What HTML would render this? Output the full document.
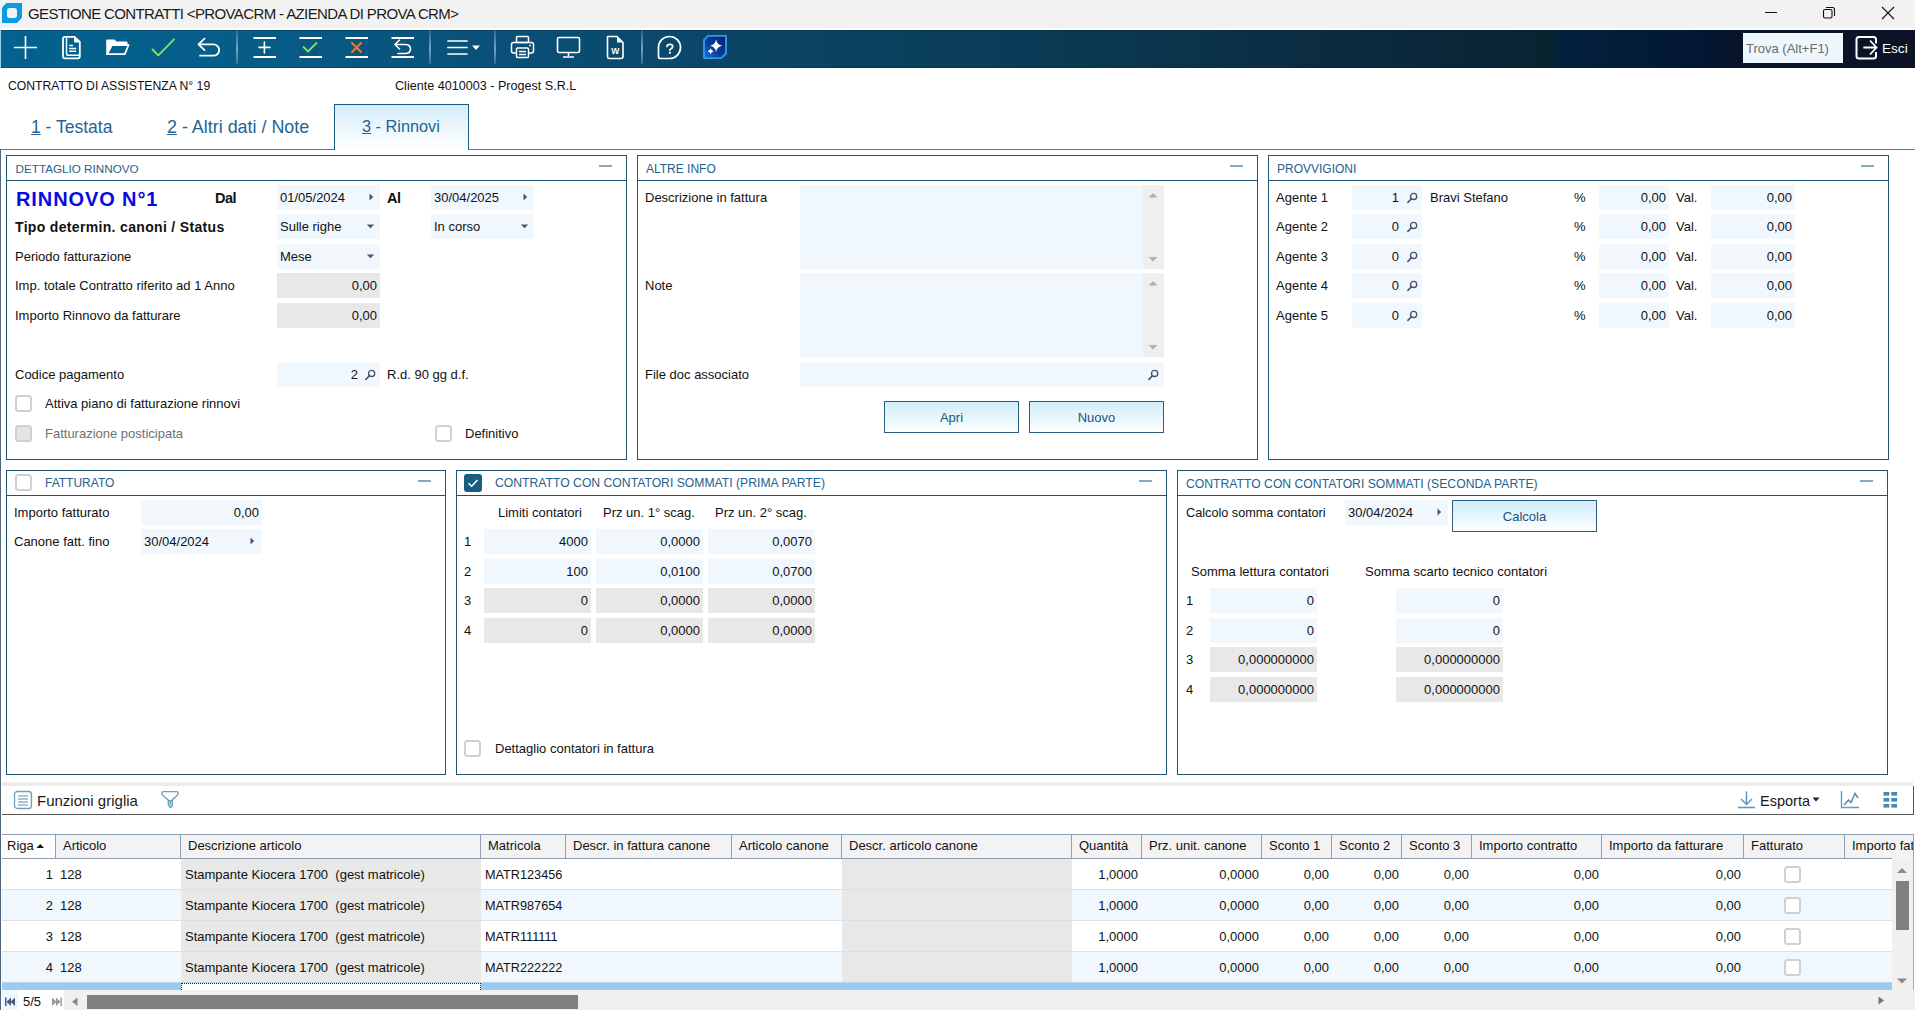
<!DOCTYPE html>
<html><head><meta charset="utf-8"><title>Gestione contratti</title>
<style>
html,body{margin:0;padding:0;width:1915px;height:1010px;overflow:hidden;background:#fff;position:relative;}
body{font-family:"Liberation Sans",sans-serif;color:#111;}
div,span,svg{position:absolute;}
span{white-space:pre;}
</style></head><body>
<div style="left:0px;top:0px;width:1915px;height:28px;background:#f2f2f2"></div>
<div style="left:0px;top:28px;width:1915px;height:2px;background:#fff"></div>
<svg style="left:2px;top:3px;" width="20" height="20" viewBox="0 0 20 20"><path d="M4.4 0 H20 V14.6 L15 20 H0 V4.4 Z" fill="#0a9ce2"/><rect x="5" y="5" width="10" height="10" rx="2.5" fill="#f2f2f2"/></svg>
<span style="left:28px;top:6px;font-size:15px;line-height:15px;color:#1a1a1a;letter-spacing:-0.62px">GESTIONE CONTRATTI &lt;PROVACRM - AZIENDA DI PROVA CRM&gt;</span>
<div style="left:1765px;top:12px;width:12px;height:1px;background:#111"></div>
<svg style="left:1822px;top:6px;" width="14" height="14" viewBox="0 0 14 14"><rect x="1.5" y="3.5" width="8.5" height="8.5" rx="1.5" fill="none" stroke="#111" stroke-width="1.1"/><path d="M4 1.5 H10.5 Q12.5 1.5 12.5 3.5 V10" fill="none" stroke="#111" stroke-width="1.1"/></svg>
<svg style="left:1881px;top:6px;" width="14" height="14" viewBox="0 0 14 14"><path d="M1 1 L13 13 M13 1 L1 13" stroke="#111" stroke-width="1.1"/></svg>
<div style="left:0px;top:30px;width:1915px;height:38px;background:linear-gradient(90deg,#04628f 0%,#065d88 12.5%,#0a5078 26%,#0b4566 38.6%,#0a3d58 52%,#0b2d42 68%,#0a2331 81%,#03213e 81.3%,#031733 88.8%,#0a1428 90.9%,#0c1426 100%)"></div>
<div style="left:0px;top:30px;width:1915px;height:1px;background:rgba(0,30,55,0.3)"></div>
<div style="left:0px;top:67px;width:1915px;height:1px;background:rgba(0,30,55,0.3)"></div>
<div style="left:0px;top:30px;width:1px;height:38px;background:#8fd0f0"></div>
<svg style="left:12px;top:35px;" width="28" height="26" viewBox="0 0 28 26"><path d="M2 12.5 H25 M13.5 1 V24" stroke="#fff" stroke-width="1.6"/></svg>
<svg style="left:60px;top:34px;" width="24" height="27" viewBox="0 0 24 27"><path d="M5 2.8 H14.5 L19.8 8 V22.3 Q19.8 24.3 17.8 24.3 H5 Q3 24.3 3 22.3 V4.8 Q3 2.8 5 2.8 Z" fill="none" stroke="#fff" stroke-width="1.8" stroke-linejoin="round"/><path d="M14.5 2.8 V8 H19.8 Z" fill="#fff" stroke="#fff" stroke-width="1"/><path d="M6.5 4 V19.5 Q6.5 21.3 8.5 21.3 H19.5" fill="none" stroke="#fff" stroke-width="1.5"/><path d="M9.2 11.5 H13 M9.2 14.5 H16.2 M9.2 17.3 H16.2" stroke="#fff" stroke-width="1.5"/></svg>
<svg style="left:104px;top:37px;" width="28" height="20" viewBox="0 0 28 20"><path d="M2.2 17.5 V3.6 Q2.2 2.6 3.2 2.6 H10.5 L12.5 4.6 H22.5 Q23.5 4.6 23.5 5.6 V8 H7.8 L3.2 17.5 Z" fill="#fff"/><path d="M3.2 17.2 L7.8 8 H24.5 L20.8 17.2 Z" fill="none" stroke="#fff" stroke-width="1.8" stroke-linejoin="round"/></svg>
<svg style="left:150px;top:36px;" width="28" height="24" viewBox="0 0 28 24"><path d="M2.5 13.5 L8.3 19.3 L24 3.3" fill="none" stroke="#8ddc64" stroke-width="1.9" stroke-linecap="round" stroke-linejoin="round"/></svg>
<svg style="left:196px;top:36px;" width="28" height="24" viewBox="0 0 28 24"><path d="M3 8.4 H17.5 A5.65 5.65 0 0 1 17.5 19.7 H4" fill="none" stroke="#fff" stroke-width="1.8" stroke-linecap="round"/><path d="M8.5 2.7 L2.5 8.4 L8.5 14.2" fill="none" stroke="#fff" stroke-width="1.8" stroke-linecap="round" stroke-linejoin="round"/></svg>
<div style="left:236px;top:30px;width:2px;height:34px;background:linear-gradient(180deg,rgba(90,140,175,0.35) 0%,rgba(140,185,210,0.8) 55%,rgba(100,150,185,0.45) 100%)"></div>
<div style="left:429px;top:30px;width:2px;height:34px;background:linear-gradient(180deg,rgba(90,140,175,0.35) 0%,rgba(140,185,210,0.8) 55%,rgba(100,150,185,0.45) 100%)"></div>
<div style="left:494px;top:30px;width:2px;height:34px;background:linear-gradient(180deg,rgba(90,140,175,0.35) 0%,rgba(140,185,210,0.8) 55%,rgba(100,150,185,0.45) 100%)"></div>
<div style="left:641px;top:30px;width:2px;height:34px;background:linear-gradient(180deg,rgba(90,140,175,0.35) 0%,rgba(140,185,210,0.8) 55%,rgba(100,150,185,0.45) 100%)"></div>
<svg style="left:253px;top:36px;" width="24" height="24" viewBox="0 0 24 24"><path d="M0.5 1.9 H23 M0.5 20.9 H23" stroke="#fff" stroke-width="2"/><path d="M6 11.4 H17 M11.4 6 V17" stroke="#fff" stroke-width="1.6" stroke-linecap="round"/></svg>
<svg style="left:299px;top:36px;" width="24" height="24" viewBox="0 0 24 24"><path d="M0.5 1.9 H23 M0.5 20.9 H23" stroke="#fff" stroke-width="2"/><path d="M4.5 11 L9 15.5 L17.5 7" fill="none" stroke="#8ddc64" stroke-width="1.8" stroke-linecap="round"/></svg>
<svg style="left:345px;top:36px;" width="24" height="24" viewBox="0 0 24 24"><path d="M0.5 1.9 H23 M0.5 20.9 H23" stroke="#fff" stroke-width="2"/><path d="M7 7 L16 16 M16 7 L7 16" stroke="#ef7b3c" stroke-width="1.8" stroke-linecap="round"/></svg>
<svg style="left:391px;top:36px;" width="24" height="24" viewBox="0 0 24 24"><path d="M0.5 1.9 H23 M0.5 20.9 H23" stroke="#fff" stroke-width="2"/><path d="M5 8.5 H14 Q19.5 8.5 19.5 13 Q19.5 17.5 14 17.5 H7" fill="none" stroke="#fff" stroke-width="1.6" stroke-linecap="round"/><path d="M8.5 4 L4 8.5 L8.5 13" fill="none" stroke="#fff" stroke-width="1.6" stroke-linecap="round"/></svg>
<svg style="left:446px;top:38px;" width="36" height="20" viewBox="0 0 36 20"><path d="M2 3 H21 M2 9.5 H21 M2 16 H21" stroke="#fff" stroke-width="1.7" stroke-linecap="round"/><path d="M26 7.5 H34 L30 12 Z" fill="#fff"/></svg>
<svg style="left:509px;top:34px;" width="28" height="27" viewBox="0 0 28 27"><rect x="7.5" y="2.5" width="12" height="6" rx="1" fill="none" stroke="#fff" stroke-width="1.5"/><path d="M7 19 H4.5 Q2.5 19 2.5 17 V10.5 Q2.5 8.5 4.5 8.5 H22.5 Q24.5 8.5 24.5 10.5 V17 Q24.5 19 22.5 19 H20" fill="none" stroke="#fff" stroke-width="1.5"/><rect x="7.5" y="14" width="12" height="9.5" rx="1" fill="none" stroke="#fff" stroke-width="1.5"/><path d="M10 17.5 H17 M10 20.5 H17" stroke="#fff" stroke-width="1.3"/><circle cx="21" cy="11.5" r="0.9" fill="#fff"/></svg>
<svg style="left:555px;top:35px;" width="28" height="25" viewBox="0 0 28 25"><rect x="2.5" y="2.5" width="22" height="15" rx="1.5" fill="none" stroke="#fff" stroke-width="1.6"/><path d="M13.5 17.5 V21 M8 22 H19" stroke="#fff" stroke-width="1.6"/></svg>
<svg style="left:603px;top:34px;" width="24" height="27" viewBox="0 0 24 27"><path d="M4.5 2.5 H14 L20 8.5 V22.5 Q20 24.5 18 24.5 H6.5 Q4.5 24.5 4.5 22.5 Z" fill="none" stroke="#fff" stroke-width="1.6" stroke-linejoin="round"/><path d="M14 2.5 V8.5 H20 Z" fill="#fff"/><text x="12.3" y="20" font-family="Liberation Sans" font-weight="bold" font-size="8.5" fill="#fff" text-anchor="middle">W</text></svg>
<svg style="left:656px;top:34px;" width="28" height="27" viewBox="0 0 28 27"><path d="M13.5 2.5 A11 11 0 1 1 13.5 24.5 H4.5 Q2.5 24.5 2.5 22.5 V13.5 A11 11 0 0 1 13.5 2.5 Z" fill="none" stroke="#fff" stroke-width="1.7"/><path d="M11 12.4 Q11 10.3 13.9 10.3 Q16.7 10.3 16.7 12.5 Q16.7 13.9 15 14.7 Q13.9 15.2 13.9 16.3" fill="none" stroke="#fff" stroke-width="1.7" stroke-linecap="round"/><circle cx="13.9" cy="18.8" r="1.1" fill="#fff"/></svg>
<svg style="left:702px;top:34px;" width="26" height="27" viewBox="0 0 26 27"><defs><linearGradient id="aig" x1="0" y1="1" x2="1" y2="0"><stop offset="0" stop-color="#1e6fd0"/><stop offset="0.45" stop-color="#0b3a98"/><stop offset="1" stop-color="#0a1f6e"/></linearGradient></defs><path d="M6 1.9 H24 V19.5 L19.3 24.1 H2 V6 Z" fill="url(#aig)" stroke="#2c9be0" stroke-width="1.9" stroke-linejoin="round"/><path d="M14.1 5.6 Q15.1 10.8 20.2 11.8 Q15.1 12.8 14.1 18 Q13.1 12.8 8 11.8 Q13.1 10.8 14.1 5.6 Z" fill="#fff"/><path d="M8.6 14.2 Q9.2 16.7 11.7 17.3 Q9.2 17.9 8.6 20.4 Q8 17.9 5.5 17.3 Q8 16.7 8.6 14.2 Z" fill="#fff"/></svg>
<div style="left:1743px;top:33px;width:100px;height:30px;background:#eef7fe"></div>
<span style="left:1746px;top:42px;font-size:13px;line-height:13px;color:#6b6b6b">Trova (Alt+F1)</span>
<svg style="left:1854px;top:35px;" width="26" height="26" viewBox="0 0 26 26"><path d="M22 8.5 V4.5 Q22 2 19.5 2 H5 Q2.5 2 2.5 4.5 V21 Q2.5 23.5 5 23.5 H19.5 Q22 23.5 22 21 V17" fill="none" stroke="#fff" stroke-width="2"/><path d="M9.3 12.5 H22.5 M16 5.5 L22.5 12.5 L16 19.5" fill="none" stroke="#fff" stroke-width="1.8"/></svg>
<span style="left:1882px;top:42px;font-size:13.6px;line-height:13.6px;color:#fff">Esci</span>
<span style="left:8px;top:80px;font-size:12.2px;line-height:12.2px;color:#111">CONTRATTO DI ASSISTENZA N° 19</span>
<span style="left:395px;top:80px;font-size:12.6px;line-height:12.6px;color:#111">Cliente 4010003 - Progest S.R.L</span>
<div style="left:0px;top:149px;width:1915px;height:1px;background:#627a90"></div>
<div style="left:0px;top:149px;width:1px;height:861px;background:#50647c"></div>
<div style="left:334px;top:104px;width:135px;height:46px;background:linear-gradient(180deg,#d2ecfb 0%,#eaf6fd 45%,#ffffff 100%);border:1px solid #1d5c7c;border-bottom:none;box-sizing:border-box"></div>
<span style="left:31px;top:119px;font-size:17.5px;line-height:17.5px;color:#236494"><u>1</u> - Testata</span>
<span style="left:167px;top:119px;font-size:17.9px;line-height:17.9px;color:#236494"><u>2</u> - Altri dati / Note</span>
<span style="left:362px;top:118px;font-size:16.3px;line-height:16.3px;color:#236494"><u>3</u> - Rinnovi</span>
<div style="left:6px;top:155px;width:621px;height:305px;border:1px solid #1f5571;box-sizing:border-box;background:#fff"></div>
<div style="left:6px;top:180px;width:621px;height:1px;background:#1f5571"></div>
<span style="left:15.5px;top:163px;font-size:11.7px;line-height:11.7px;color:#24628e">DETTAGLIO RINNOVO</span>
<div style="left:599px;top:165px;width:13px;height:2px;background:#88a8bc"></div>
<span style="left:16px;top:189px;font-size:20px;line-height:20px;color:#0a0ae0;font-weight:bold;letter-spacing:0.9px">RINNOVO N°1</span>
<span style="left:215px;top:191px;font-size:14.5px;line-height:14.5px;color:#111;font-weight:bold;letter-spacing:-0.5px">Dal</span>
<span style="left:387px;top:191px;font-size:14.5px;line-height:14.5px;color:#111;font-weight:bold;letter-spacing:-0.5px">Al</span>
<span style="left:15px;top:220px;font-size:14px;line-height:14px;color:#111;font-weight:bold;letter-spacing:0.33px">Tipo determin. canoni / Status</span>
<div style="left:277px;top:185px;width:103px;height:25px;background:#f0f8fe"></div>
<span style="left:280px;top:191px;font-size:13px;line-height:13px;">01/05/2024</span>
<svg style="left:368px;top:193px;" width="6" height="8" viewBox="0 0 6 8"><path d="M1.5 0.5 L5.2 4 L1.5 7.5 Z" fill="#4a5670"/></svg>
<div style="left:431px;top:185px;width:103px;height:25px;background:#f0f8fe"></div>
<span style="left:434px;top:191px;font-size:13px;line-height:13px;">30/04/2025</span>
<svg style="left:522px;top:193px;" width="6" height="8" viewBox="0 0 6 8"><path d="M1.5 0.5 L5.2 4 L1.5 7.5 Z" fill="#4a5670"/></svg>
<div style="left:277px;top:214px;width:103px;height:25px;background:#f0f8fe"></div>
<span style="left:280px;top:220px;font-size:13px;line-height:13px;">Sulle righe</span>
<svg style="left:366px;top:223px;" width="9" height="6" viewBox="0 0 9 6"><path d="M0.8 1.5 L8.2 1.5 L4.5 5.3 Z" fill="#4a5670"/></svg>
<div style="left:431px;top:214px;width:103px;height:25px;background:#f0f8fe"></div>
<span style="left:434px;top:220px;font-size:13px;line-height:13px;">In corso</span>
<svg style="left:520px;top:223px;" width="9" height="6" viewBox="0 0 9 6"><path d="M0.8 1.5 L8.2 1.5 L4.5 5.3 Z" fill="#4a5670"/></svg>
<span style="left:15px;top:250px;font-size:13px;line-height:13px;">Periodo fatturazione</span>
<div style="left:277px;top:244px;width:103px;height:25px;background:#f0f8fe"></div>
<span style="left:280px;top:250px;font-size:13px;line-height:13px;">Mese</span>
<svg style="left:366px;top:253px;" width="9" height="6" viewBox="0 0 9 6"><path d="M0.8 1.5 L8.2 1.5 L4.5 5.3 Z" fill="#4a5670"/></svg>
<span style="left:15px;top:279px;font-size:13px;line-height:13px;">Imp. totale Contratto riferito ad 1 Anno</span>
<div style="left:277px;top:273px;width:103px;height:25px;background:#e8e8e8"></div>
<span style="right:1538px;top:279px;font-size:13px;line-height:13px;">0,00</span>
<span style="left:15px;top:309px;font-size:13px;line-height:13px;">Importo Rinnovo da fatturare</span>
<div style="left:277px;top:303px;width:103px;height:25px;background:#e8e8e8"></div>
<span style="right:1538px;top:309px;font-size:13px;line-height:13px;">0,00</span>
<span style="left:15px;top:368px;font-size:13px;line-height:13px;">Codice pagamento</span>
<div style="left:277px;top:362px;width:103px;height:25px;background:#f0f8fe"></div>
<span style="right:1557px;top:368px;font-size:13px;line-height:13px;">2</span>
<svg style="left:364px;top:368px;" width="13" height="13" viewBox="0 0 13 13"><circle cx="7.6" cy="5.4" r="3.1" fill="none" stroke="#46526a" stroke-width="1.3"/><path d="M5.4 7.7 L1.9 11.4" stroke="#46526a" stroke-width="1.6" stroke-linecap="round"/></svg>
<span style="left:387px;top:368px;font-size:13px;line-height:13px;">R.d. 90 gg d.f.</span>
<div style="left:15px;top:395px;width:17px;height:17px;background:#fff;border:2px solid #d0d0d0;border-radius:3.5px;box-sizing:border-box"></div>
<span style="left:45px;top:397px;font-size:13px;line-height:13px;">Attiva piano di fatturazione rinnovi</span>
<div style="left:15px;top:425px;width:17px;height:17px;background:#e4e4e4;border:2px solid #d0d0d0;border-radius:3.5px;box-sizing:border-box"></div>
<span style="left:45px;top:427px;font-size:13px;line-height:13px;color:#707070">Fatturazione posticipata</span>
<div style="left:435px;top:425px;width:17px;height:17px;background:#fff;border:2px solid #d0d0d0;border-radius:3.5px;box-sizing:border-box"></div>
<span style="left:465px;top:427px;font-size:13px;line-height:13px;">Definitivo</span>
<div style="left:637px;top:155px;width:621px;height:305px;border:1px solid #1f5571;box-sizing:border-box;background:#fff"></div>
<div style="left:637px;top:180px;width:621px;height:1px;background:#1f5571"></div>
<span style="left:646px;top:163px;font-size:12px;line-height:12px;color:#24628e">ALTRE INFO</span>
<div style="left:1230px;top:165px;width:13px;height:2px;background:#88a8bc"></div>
<span style="left:645px;top:191px;font-size:13px;line-height:13px;">Descrizione in fattura</span>
<div style="left:800px;top:185px;width:364px;height:84px;background:#f0f8fe"></div>
<div style="left:1143px;top:185px;width:21px;height:84px;background:#efefef"></div>
<svg style="left:1148px;top:192px;" width="10" height="7" viewBox="0 0 10 7"><path d="M0.5 5.5 L5 1 L9.5 5.5 Z" fill="#aeb2be"/></svg>
<svg style="left:1148px;top:256px;" width="10" height="7" viewBox="0 0 10 7"><path d="M0.5 1 L5 5.5 L9.5 1 Z" fill="#aeb2be"/></svg>
<span style="left:645px;top:279px;font-size:13px;line-height:13px;">Note</span>
<div style="left:800px;top:273px;width:364px;height:84px;background:#f0f8fe"></div>
<div style="left:1143px;top:273px;width:21px;height:84px;background:#efefef"></div>
<svg style="left:1148px;top:280px;" width="10" height="7" viewBox="0 0 10 7"><path d="M0.5 5.5 L5 1 L9.5 5.5 Z" fill="#aeb2be"/></svg>
<svg style="left:1148px;top:344px;" width="10" height="7" viewBox="0 0 10 7"><path d="M0.5 1 L5 5.5 L9.5 1 Z" fill="#aeb2be"/></svg>
<span style="left:645px;top:368px;font-size:13px;line-height:13px;">File doc associato</span>
<div style="left:800px;top:362px;width:364px;height:25px;background:#f0f8fe"></div>
<svg style="left:1147px;top:368px;" width="13" height="13" viewBox="0 0 13 13"><circle cx="7.6" cy="5.4" r="3.1" fill="none" stroke="#46526a" stroke-width="1.3"/><path d="M5.4 7.7 L1.9 11.4" stroke="#46526a" stroke-width="1.6" stroke-linecap="round"/></svg>
<div style="left:884px;top:401px;width:135px;height:32px;background:linear-gradient(180deg,#d2edfb 0%,#e8f6fd 55%,#ffffff 100%);border:1px solid #2a5f80;box-sizing:border-box"></div>
<span style="left:851.5px;width:200px;text-align:center;top:411px;font-size:13px;line-height:13px;color:#1d5478">Apri</span>
<div style="left:1029px;top:401px;width:135px;height:32px;background:linear-gradient(180deg,#d2edfb 0%,#e8f6fd 55%,#ffffff 100%);border:1px solid #2a5f80;box-sizing:border-box"></div>
<span style="left:996.5px;width:200px;text-align:center;top:411px;font-size:13px;line-height:13px;color:#1d5478">Nuovo</span>
<div style="left:1268px;top:155px;width:621px;height:305px;border:1px solid #1f5571;box-sizing:border-box;background:#fff"></div>
<div style="left:1268px;top:180px;width:621px;height:1px;background:#1f5571"></div>
<span style="left:1277px;top:163px;font-size:12px;line-height:12px;color:#24628e">PROVVIGIONI</span>
<div style="left:1861px;top:165px;width:13px;height:2px;background:#88a8bc"></div>
<span style="left:1276px;top:191px;font-size:13px;line-height:13px;">Agente 1</span>
<div style="left:1352px;top:185px;width:70px;height:25px;background:#f0f8fe"></div>
<span style="right:516px;top:191px;font-size:13px;line-height:13px;">1</span>
<svg style="left:1406px;top:191px;" width="13" height="13" viewBox="0 0 13 13"><circle cx="7.6" cy="5.4" r="3.1" fill="none" stroke="#46526a" stroke-width="1.3"/><path d="M5.4 7.7 L1.9 11.4" stroke="#46526a" stroke-width="1.6" stroke-linecap="round"/></svg>
<span style="left:1430px;top:191px;font-size:13px;line-height:13px;">Bravi Stefano</span>
<span style="left:1574px;top:191px;font-size:13px;line-height:13px;">%</span>
<div style="left:1599px;top:185px;width:70px;height:25px;background:#f0f8fe"></div>
<span style="right:249px;top:191px;font-size:13px;line-height:13px;">0,00</span>
<span style="left:1676px;top:191px;font-size:13px;line-height:13px;">Val.</span>
<div style="left:1711px;top:185px;width:84px;height:25px;background:#f0f8fe"></div>
<span style="right:123px;top:191px;font-size:13px;line-height:13px;">0,00</span>
<span style="left:1276px;top:220px;font-size:13px;line-height:13px;">Agente 2</span>
<div style="left:1352px;top:214px;width:70px;height:25px;background:#f0f8fe"></div>
<span style="right:516px;top:220px;font-size:13px;line-height:13px;">0</span>
<svg style="left:1406px;top:220px;" width="13" height="13" viewBox="0 0 13 13"><circle cx="7.6" cy="5.4" r="3.1" fill="none" stroke="#46526a" stroke-width="1.3"/><path d="M5.4 7.7 L1.9 11.4" stroke="#46526a" stroke-width="1.6" stroke-linecap="round"/></svg>
<span style="left:1574px;top:220px;font-size:13px;line-height:13px;">%</span>
<div style="left:1599px;top:214px;width:70px;height:25px;background:#f0f8fe"></div>
<span style="right:249px;top:220px;font-size:13px;line-height:13px;">0,00</span>
<span style="left:1676px;top:220px;font-size:13px;line-height:13px;">Val.</span>
<div style="left:1711px;top:214px;width:84px;height:25px;background:#f0f8fe"></div>
<span style="right:123px;top:220px;font-size:13px;line-height:13px;">0,00</span>
<span style="left:1276px;top:250px;font-size:13px;line-height:13px;">Agente 3</span>
<div style="left:1352px;top:244px;width:70px;height:25px;background:#f0f8fe"></div>
<span style="right:516px;top:250px;font-size:13px;line-height:13px;">0</span>
<svg style="left:1406px;top:250px;" width="13" height="13" viewBox="0 0 13 13"><circle cx="7.6" cy="5.4" r="3.1" fill="none" stroke="#46526a" stroke-width="1.3"/><path d="M5.4 7.7 L1.9 11.4" stroke="#46526a" stroke-width="1.6" stroke-linecap="round"/></svg>
<span style="left:1574px;top:250px;font-size:13px;line-height:13px;">%</span>
<div style="left:1599px;top:244px;width:70px;height:25px;background:#f0f8fe"></div>
<span style="right:249px;top:250px;font-size:13px;line-height:13px;">0,00</span>
<span style="left:1676px;top:250px;font-size:13px;line-height:13px;">Val.</span>
<div style="left:1711px;top:244px;width:84px;height:25px;background:#f0f8fe"></div>
<span style="right:123px;top:250px;font-size:13px;line-height:13px;">0,00</span>
<span style="left:1276px;top:279px;font-size:13px;line-height:13px;">Agente 4</span>
<div style="left:1352px;top:273px;width:70px;height:25px;background:#f0f8fe"></div>
<span style="right:516px;top:279px;font-size:13px;line-height:13px;">0</span>
<svg style="left:1406px;top:279px;" width="13" height="13" viewBox="0 0 13 13"><circle cx="7.6" cy="5.4" r="3.1" fill="none" stroke="#46526a" stroke-width="1.3"/><path d="M5.4 7.7 L1.9 11.4" stroke="#46526a" stroke-width="1.6" stroke-linecap="round"/></svg>
<span style="left:1574px;top:279px;font-size:13px;line-height:13px;">%</span>
<div style="left:1599px;top:273px;width:70px;height:25px;background:#f0f8fe"></div>
<span style="right:249px;top:279px;font-size:13px;line-height:13px;">0,00</span>
<span style="left:1676px;top:279px;font-size:13px;line-height:13px;">Val.</span>
<div style="left:1711px;top:273px;width:84px;height:25px;background:#f0f8fe"></div>
<span style="right:123px;top:279px;font-size:13px;line-height:13px;">0,00</span>
<span style="left:1276px;top:309px;font-size:13px;line-height:13px;">Agente 5</span>
<div style="left:1352px;top:303px;width:70px;height:25px;background:#f0f8fe"></div>
<span style="right:516px;top:309px;font-size:13px;line-height:13px;">0</span>
<svg style="left:1406px;top:309px;" width="13" height="13" viewBox="0 0 13 13"><circle cx="7.6" cy="5.4" r="3.1" fill="none" stroke="#46526a" stroke-width="1.3"/><path d="M5.4 7.7 L1.9 11.4" stroke="#46526a" stroke-width="1.6" stroke-linecap="round"/></svg>
<span style="left:1574px;top:309px;font-size:13px;line-height:13px;">%</span>
<div style="left:1599px;top:303px;width:70px;height:25px;background:#f0f8fe"></div>
<span style="right:249px;top:309px;font-size:13px;line-height:13px;">0,00</span>
<span style="left:1676px;top:309px;font-size:13px;line-height:13px;">Val.</span>
<div style="left:1711px;top:303px;width:84px;height:25px;background:#f0f8fe"></div>
<span style="right:123px;top:309px;font-size:13px;line-height:13px;">0,00</span>
<div style="left:6px;top:470px;width:440px;height:305px;border:1px solid #1f5571;box-sizing:border-box;background:#fff"></div>
<div style="left:6px;top:495px;width:440px;height:1px;background:#1f5571"></div>
<span style="left:45px;top:477px;font-size:12px;line-height:12px;color:#24628e">FATTURATO</span>
<div style="left:418px;top:480px;width:13px;height:2px;background:#88a8bc"></div>
<div style="left:15px;top:474px;width:17px;height:17px;background:#fff;border:2px solid #d0d0d0;border-radius:3.5px;box-sizing:border-box"></div>
<span style="left:14px;top:506px;font-size:13px;line-height:13px;">Importo fatturato</span>
<div style="left:141px;top:500px;width:121px;height:25px;background:#f0f8fe"></div>
<span style="right:1656px;top:506px;font-size:13px;line-height:13px;">0,00</span>
<span style="left:14px;top:535px;font-size:13px;line-height:13px;">Canone fatt. fino</span>
<div style="left:141px;top:529px;width:121px;height:25px;background:#f0f8fe"></div>
<span style="left:144px;top:535px;font-size:13px;line-height:13px;">30/04/2024</span>
<svg style="left:249px;top:537px;" width="6" height="8" viewBox="0 0 6 8"><path d="M1.5 0.5 L5.2 4 L1.5 7.5 Z" fill="#4a5670"/></svg>
<div style="left:456px;top:470px;width:711px;height:305px;border:1px solid #1f5571;box-sizing:border-box;background:#fff"></div>
<div style="left:456px;top:495px;width:711px;height:1px;background:#1f5571"></div>
<span style="left:495px;top:477px;font-size:12.2px;line-height:12.2px;color:#24628e">CONTRATTO CON CONTATORI SOMMATI (PRIMA PARTE)</span>
<div style="left:1139px;top:480px;width:13px;height:2px;background:#88a8bc"></div>
<div style="left:464px;top:474px;width:18px;height:18px;background:#1b5d7e;border-radius:3px"></div>
<svg style="left:464px;top:474px;" width="18" height="18" viewBox="0 0 18 18"><path d="M4.5 9.2 L7.6 12.2 L13.5 6" fill="none" stroke="#fff" stroke-width="1.6"/></svg>
<span style="left:498px;top:506px;font-size:13px;line-height:13px;">Limiti contatori</span>
<span style="left:603px;top:506px;font-size:13px;line-height:13px;">Prz un. 1° scag.</span>
<span style="left:715px;top:506px;font-size:13px;line-height:13px;">Prz un. 2° scag.</span>
<span style="left:464px;top:535px;font-size:13px;line-height:13px;">1</span>
<div style="left:484px;top:529px;width:107px;height:25px;background:#f0f8fe"></div>
<span style="right:1327px;top:535px;font-size:13px;line-height:13px;">4000</span>
<div style="left:596px;top:529px;width:107px;height:25px;background:#f0f8fe"></div>
<span style="right:1215px;top:535px;font-size:13px;line-height:13px;">0,0000</span>
<div style="left:708px;top:529px;width:107px;height:25px;background:#f0f8fe"></div>
<span style="right:1103px;top:535px;font-size:13px;line-height:13px;">0,0070</span>
<span style="left:464px;top:565px;font-size:13px;line-height:13px;">2</span>
<div style="left:484px;top:559px;width:107px;height:25px;background:#f0f8fe"></div>
<span style="right:1327px;top:565px;font-size:13px;line-height:13px;">100</span>
<div style="left:596px;top:559px;width:107px;height:25px;background:#f0f8fe"></div>
<span style="right:1215px;top:565px;font-size:13px;line-height:13px;">0,0100</span>
<div style="left:708px;top:559px;width:107px;height:25px;background:#f0f8fe"></div>
<span style="right:1103px;top:565px;font-size:13px;line-height:13px;">0,0700</span>
<span style="left:464px;top:594px;font-size:13px;line-height:13px;">3</span>
<div style="left:484px;top:588px;width:107px;height:25px;background:#e8e8e8"></div>
<span style="right:1327px;top:594px;font-size:13px;line-height:13px;">0</span>
<div style="left:596px;top:588px;width:107px;height:25px;background:#e8e8e8"></div>
<span style="right:1215px;top:594px;font-size:13px;line-height:13px;">0,0000</span>
<div style="left:708px;top:588px;width:107px;height:25px;background:#e8e8e8"></div>
<span style="right:1103px;top:594px;font-size:13px;line-height:13px;">0,0000</span>
<span style="left:464px;top:624px;font-size:13px;line-height:13px;">4</span>
<div style="left:484px;top:618px;width:107px;height:25px;background:#e8e8e8"></div>
<span style="right:1327px;top:624px;font-size:13px;line-height:13px;">0</span>
<div style="left:596px;top:618px;width:107px;height:25px;background:#e8e8e8"></div>
<span style="right:1215px;top:624px;font-size:13px;line-height:13px;">0,0000</span>
<div style="left:708px;top:618px;width:107px;height:25px;background:#e8e8e8"></div>
<span style="right:1103px;top:624px;font-size:13px;line-height:13px;">0,0000</span>
<div style="left:464px;top:740px;width:17px;height:17px;background:#fff;border:2px solid #d0d0d0;border-radius:3.5px;box-sizing:border-box"></div>
<span style="left:495px;top:742px;font-size:13px;line-height:13px;">Dettaglio contatori in fattura</span>
<div style="left:1177px;top:470px;width:711px;height:305px;border:1px solid #1f5571;box-sizing:border-box;background:#fff"></div>
<div style="left:1177px;top:495px;width:711px;height:1px;background:#1f5571"></div>
<span style="left:1186px;top:478px;font-size:12.2px;line-height:12.2px;color:#24628e">CONTRATTO CON CONTATORI SOMMATI (SECONDA PARTE)</span>
<div style="left:1860px;top:480px;width:13px;height:2px;background:#88a8bc"></div>
<span style="left:1186px;top:507px;font-size:12.7px;line-height:12.7px;">Calcolo somma contatori</span>
<div style="left:1345px;top:500px;width:103px;height:25px;background:#f0f8fe"></div>
<span style="left:1348px;top:506px;font-size:13px;line-height:13px;">30/04/2024</span>
<svg style="left:1436px;top:508px;" width="6" height="8" viewBox="0 0 6 8"><path d="M1.5 0.5 L5.2 4 L1.5 7.5 Z" fill="#4a5670"/></svg>
<div style="left:1452px;top:500px;width:145px;height:32px;background:linear-gradient(180deg,#d2edfb 0%,#e8f6fd 55%,#ffffff 100%);border:1px solid #2a5f80;box-sizing:border-box"></div>
<span style="left:1424.5px;width:200px;text-align:center;top:510px;font-size:13px;line-height:13px;color:#1d5478">Calcola</span>
<span style="left:1191px;top:565px;font-size:13px;line-height:13px;">Somma lettura contatori</span>
<span style="left:1365px;top:565px;font-size:13px;line-height:13px;">Somma scarto tecnico contatori</span>
<span style="left:1186px;top:594px;font-size:13px;line-height:13px;">1</span>
<div style="left:1210px;top:588px;width:107px;height:25px;background:#f0f8fe"></div>
<span style="right:601px;top:594px;font-size:13px;line-height:13px;">0</span>
<div style="left:1396px;top:588px;width:107px;height:25px;background:#f0f8fe"></div>
<span style="right:415px;top:594px;font-size:13px;line-height:13px;">0</span>
<span style="left:1186px;top:624px;font-size:13px;line-height:13px;">2</span>
<div style="left:1210px;top:618px;width:107px;height:25px;background:#f0f8fe"></div>
<span style="right:601px;top:624px;font-size:13px;line-height:13px;">0</span>
<div style="left:1396px;top:618px;width:107px;height:25px;background:#f0f8fe"></div>
<span style="right:415px;top:624px;font-size:13px;line-height:13px;">0</span>
<span style="left:1186px;top:653px;font-size:13px;line-height:13px;">3</span>
<div style="left:1210px;top:647px;width:107px;height:25px;background:#e8e8e8"></div>
<span style="right:601px;top:653px;font-size:13px;line-height:13px;">0,000000000</span>
<div style="left:1396px;top:647px;width:107px;height:25px;background:#e8e8e8"></div>
<span style="right:415px;top:653px;font-size:13px;line-height:13px;">0,000000000</span>
<span style="left:1186px;top:683px;font-size:13px;line-height:13px;">4</span>
<div style="left:1210px;top:677px;width:107px;height:25px;background:#e8e8e8"></div>
<span style="right:601px;top:683px;font-size:13px;line-height:13px;">0,000000000</span>
<div style="left:1396px;top:677px;width:107px;height:25px;background:#e8e8e8"></div>
<span style="right:415px;top:683px;font-size:13px;line-height:13px;">0,000000000</span>
<div style="left:2px;top:782px;width:1911px;height:4px;background:#ececec"></div>
<div style="left:2px;top:786px;width:1912px;height:29px;background:#fff;border-right:1px solid #555;border-bottom:1px solid #555;box-sizing:border-box"></div>
<svg style="left:13px;top:790px;" width="20" height="20" viewBox="0 0 20 20"><rect x="1.5" y="1.5" width="17" height="17" rx="3" fill="#fff" stroke="#6e9cbc" stroke-width="1.3"/><path d="M5 6 H15 M5 9 H15 M5 12 H15 M5 15 H15" stroke="#7a8a9a" stroke-width="1.2"/><path d="M5 9 H15 M5 12 H15" stroke="#8ccaf0" stroke-width="1.2"/></svg>
<span style="left:37px;top:793px;font-size:15px;line-height:15px;color:#1a1a1a">Funzioni griglia</span>
<svg style="left:160px;top:790px;" width="20" height="20" viewBox="0 0 20 20"><path d="M3.5 1.6 H16.5 Q18.2 1.6 18.2 3.2 Q18.2 4.8 15.5 7 L12.3 9.6 V15.5 L10.5 17.8 M3.5 1.6 Q1.8 1.6 1.8 3.2 Q1.8 4.8 4.5 7 L8.3 10 V14.5 L10.5 17.8" fill="none" stroke="#6e9ebc" stroke-width="1.4" stroke-linejoin="round"/><path d="M8.3 10.8 H12.3 M10.3 10.8 V15" stroke="#6e9ebc" stroke-width="1.4"/></svg>
<svg style="left:1736px;top:790px;" width="22" height="20" viewBox="0 0 22 20"><path d="M10.5 1.5 V14 M5 9 L10.5 14.5 L16 9" fill="none" stroke="#5e98ba" stroke-width="1.5"/><path d="M2 17.5 H19" stroke="#5e98ba" stroke-width="1.6"/></svg>
<span style="left:1760px;top:794px;font-size:14.5px;line-height:14.5px;color:#1a1a1a">Esporta</span>
<svg style="left:1812px;top:797px;" width="8" height="5" viewBox="0 0 8 5"><path d="M0.5 0.5 H7.5 L4 4.5 Z" fill="#222"/></svg>
<svg style="left:1840px;top:790px;" width="22" height="20" viewBox="0 0 22 20"><path d="M1.5 1 V17.5 H19" fill="none" stroke="#6a9ab8" stroke-width="1.4"/><path d="M4 15 L8.5 10 L11 12.5 L15 3.5 L18 8" fill="none" stroke="#4a88b0" stroke-width="1.4"/></svg>
<svg style="left:1882px;top:791px;" width="17" height="18" viewBox="0 0 17 18"><g fill="#4a88b0"><rect x="1.5" y="1" width="5.8" height="3.6"/><rect x="9.3" y="1" width="5.8" height="3.6"/><rect x="1.5" y="7" width="5.8" height="3.6"/><rect x="9.3" y="7" width="5.8" height="3.6"/><rect x="1.5" y="13" width="5.8" height="3.6"/><rect x="9.3" y="13" width="5.8" height="3.6"/></g></svg>
<div style="left:2px;top:858px;width:1890px;height:32px;background:#fff"></div>
<div style="left:181px;top:858px;width:300px;height:32px;background:#e8e8e8"></div>
<div style="left:842px;top:858px;width:230px;height:32px;background:#e8e8e8"></div>
<div style="left:2px;top:889px;width:1890px;height:32px;background:#f0f8fe"></div>
<div style="left:181px;top:889px;width:300px;height:32px;background:#e8e8e8"></div>
<div style="left:842px;top:889px;width:230px;height:32px;background:#e8e8e8"></div>
<div style="left:2px;top:920px;width:1890px;height:32px;background:#fff"></div>
<div style="left:181px;top:920px;width:300px;height:32px;background:#e8e8e8"></div>
<div style="left:842px;top:920px;width:230px;height:32px;background:#e8e8e8"></div>
<div style="left:2px;top:951px;width:1890px;height:32px;background:#f0f8fe"></div>
<div style="left:181px;top:951px;width:300px;height:32px;background:#e8e8e8"></div>
<div style="left:842px;top:951px;width:230px;height:32px;background:#e8e8e8"></div>
<div style="left:2px;top:889px;width:1890px;height:1px;background:#dcdfe3"></div>
<div style="left:2px;top:920px;width:1890px;height:1px;background:#dcdfe3"></div>
<div style="left:2px;top:951px;width:1890px;height:1px;background:#dcdfe3"></div>
<div style="left:2px;top:982px;width:1890px;height:1px;background:#dcdfe3"></div>
<span style="right:1862px;top:868px;font-size:13px;line-height:13px;">1</span>
<span style="left:60px;top:868px;font-size:13px;line-height:13px;">128</span>
<span style="left:185px;top:868px;font-size:13px;line-height:13px;">Stampante Kiocera 1700&nbsp; (gest matricole)</span>
<span style="left:485px;top:869px;font-size:12.7px;line-height:12.7px;">MATR123456</span>
<span style="right:777px;top:868px;font-size:13px;line-height:13px;">1,0000</span>
<span style="right:656px;top:868px;font-size:13px;line-height:13px;">0,0000</span>
<span style="right:586px;top:868px;font-size:13px;line-height:13px;">0,00</span>
<span style="right:516px;top:868px;font-size:13px;line-height:13px;">0,00</span>
<span style="right:446px;top:868px;font-size:13px;line-height:13px;">0,00</span>
<span style="right:316px;top:868px;font-size:13px;line-height:13px;">0,00</span>
<span style="right:174px;top:868px;font-size:13px;line-height:13px;">0,00</span>
<div style="left:1784px;top:866px;width:17px;height:17px;background:#fff;border:2px solid #d0d0d0;border-radius:3.5px;box-sizing:border-box"></div>
<span style="right:1862px;top:899px;font-size:13px;line-height:13px;">2</span>
<span style="left:60px;top:899px;font-size:13px;line-height:13px;">128</span>
<span style="left:185px;top:899px;font-size:13px;line-height:13px;">Stampante Kiocera 1700&nbsp; (gest matricole)</span>
<span style="left:485px;top:900px;font-size:12.7px;line-height:12.7px;">MATR987654</span>
<span style="right:777px;top:899px;font-size:13px;line-height:13px;">1,0000</span>
<span style="right:656px;top:899px;font-size:13px;line-height:13px;">0,0000</span>
<span style="right:586px;top:899px;font-size:13px;line-height:13px;">0,00</span>
<span style="right:516px;top:899px;font-size:13px;line-height:13px;">0,00</span>
<span style="right:446px;top:899px;font-size:13px;line-height:13px;">0,00</span>
<span style="right:316px;top:899px;font-size:13px;line-height:13px;">0,00</span>
<span style="right:174px;top:899px;font-size:13px;line-height:13px;">0,00</span>
<div style="left:1784px;top:897px;width:17px;height:17px;background:#fff;border:2px solid #d0d0d0;border-radius:3.5px;box-sizing:border-box"></div>
<span style="right:1862px;top:930px;font-size:13px;line-height:13px;">3</span>
<span style="left:60px;top:930px;font-size:13px;line-height:13px;">128</span>
<span style="left:185px;top:930px;font-size:13px;line-height:13px;">Stampante Kiocera 1700&nbsp; (gest matricole)</span>
<span style="left:485px;top:931px;font-size:12.7px;line-height:12.7px;">MATR111111</span>
<span style="right:777px;top:930px;font-size:13px;line-height:13px;">1,0000</span>
<span style="right:656px;top:930px;font-size:13px;line-height:13px;">0,0000</span>
<span style="right:586px;top:930px;font-size:13px;line-height:13px;">0,00</span>
<span style="right:516px;top:930px;font-size:13px;line-height:13px;">0,00</span>
<span style="right:446px;top:930px;font-size:13px;line-height:13px;">0,00</span>
<span style="right:316px;top:930px;font-size:13px;line-height:13px;">0,00</span>
<span style="right:174px;top:930px;font-size:13px;line-height:13px;">0,00</span>
<div style="left:1784px;top:928px;width:17px;height:17px;background:#fff;border:2px solid #d0d0d0;border-radius:3.5px;box-sizing:border-box"></div>
<span style="right:1862px;top:961px;font-size:13px;line-height:13px;">4</span>
<span style="left:60px;top:961px;font-size:13px;line-height:13px;">128</span>
<span style="left:185px;top:961px;font-size:13px;line-height:13px;">Stampante Kiocera 1700&nbsp; (gest matricole)</span>
<span style="left:485px;top:962px;font-size:12.7px;line-height:12.7px;">MATR222222</span>
<span style="right:777px;top:961px;font-size:13px;line-height:13px;">1,0000</span>
<span style="right:656px;top:961px;font-size:13px;line-height:13px;">0,0000</span>
<span style="right:586px;top:961px;font-size:13px;line-height:13px;">0,00</span>
<span style="right:516px;top:961px;font-size:13px;line-height:13px;">0,00</span>
<span style="right:446px;top:961px;font-size:13px;line-height:13px;">0,00</span>
<span style="right:316px;top:961px;font-size:13px;line-height:13px;">0,00</span>
<span style="right:174px;top:961px;font-size:13px;line-height:13px;">0,00</span>
<div style="left:1784px;top:959px;width:17px;height:17px;background:#fff;border:2px solid #d0d0d0;border-radius:3.5px;box-sizing:border-box"></div>
<div style="left:2px;top:834px;width:1912px;height:25px;background:#f3f3f3;border-top:1px solid #8fa0b2;border-bottom:1px solid #8fa0b2;border-right:1px solid #8fa0b2;box-sizing:border-box;overflow:hidden">
<div style="left:0px;top:0px;width:53px;height:23px;background:#fff"></div>
<div style="left:53px;top:0px;width:1px;height:23px;background:#8fa0b2"></div>
<div style="left:178px;top:0px;width:1px;height:23px;background:#8fa0b2"></div>
<div style="left:478px;top:0px;width:1px;height:23px;background:#8fa0b2"></div>
<div style="left:563px;top:0px;width:1px;height:23px;background:#8fa0b2"></div>
<div style="left:729px;top:0px;width:1px;height:23px;background:#8fa0b2"></div>
<div style="left:839px;top:0px;width:1px;height:23px;background:#8fa0b2"></div>
<div style="left:1069px;top:0px;width:1px;height:23px;background:#8fa0b2"></div>
<div style="left:1139px;top:0px;width:1px;height:23px;background:#8fa0b2"></div>
<div style="left:1259px;top:0px;width:1px;height:23px;background:#8fa0b2"></div>
<div style="left:1329px;top:0px;width:1px;height:23px;background:#8fa0b2"></div>
<div style="left:1399px;top:0px;width:1px;height:23px;background:#8fa0b2"></div>
<div style="left:1469px;top:0px;width:1px;height:23px;background:#8fa0b2"></div>
<div style="left:1599px;top:0px;width:1px;height:23px;background:#8fa0b2"></div>
<div style="left:1741px;top:0px;width:1px;height:23px;background:#8fa0b2"></div>
<div style="left:1842px;top:0px;width:1px;height:23px;background:#8fa0b2"></div>
<span style="left:5px;top:4px;font-size:13px;line-height:13px;color:#111">Riga</span>
<span style="left:61px;top:4px;font-size:13px;line-height:13px;color:#111">Articolo</span>
<span style="left:186px;top:4px;font-size:13px;line-height:13px;color:#111">Descrizione articolo</span>
<span style="left:486px;top:4px;font-size:13px;line-height:13px;color:#111">Matricola</span>
<span style="left:571px;top:4px;font-size:13px;line-height:13px;color:#111">Descr. in fattura canone</span>
<span style="left:737px;top:4px;font-size:13px;line-height:13px;color:#111">Articolo canone</span>
<span style="left:847px;top:4px;font-size:13px;line-height:13px;color:#111">Descr. articolo canone</span>
<span style="left:1077px;top:4px;font-size:13px;line-height:13px;color:#111">Quantità</span>
<span style="left:1147px;top:4px;font-size:13px;line-height:13px;color:#111">Prz. unit. canone</span>
<span style="left:1267px;top:4px;font-size:13px;line-height:13px;color:#111">Sconto 1</span>
<span style="left:1337px;top:4px;font-size:13px;line-height:13px;color:#111">Sconto 2</span>
<span style="left:1407px;top:4px;font-size:13px;line-height:13px;color:#111">Sconto 3</span>
<span style="left:1477px;top:4px;font-size:13px;line-height:13px;color:#111">Importo contratto</span>
<span style="left:1607px;top:4px;font-size:13px;line-height:13px;color:#111">Importo da fatturare</span>
<span style="left:1749px;top:4px;font-size:13px;line-height:13px;color:#111">Fatturato</span>
<span style="left:1850px;top:4px;font-size:13px;line-height:13px;color:#111">Importo fatturato</span>
</div>
<svg style="left:36px;top:843px;" width="9" height="6" viewBox="0 0 9 6"><path d="M0.5 5 H8 L4.25 1 Z" fill="#111"/></svg>
<div style="left:2px;top:982px;width:1890px;height:1px;background:#b8d4ea"></div>
<div style="left:2px;top:983px;width:1890px;height:7px;background:#9ccbf0"></div>
<div style="left:181px;top:983px;width:300px;height:7px;background:#fff;border:1px dotted #222;border-bottom:none;box-sizing:border-box"></div>
<div style="left:1892px;top:858px;width:21px;height:132px;background:#f0f0f0"></div>
<svg style="left:1895px;top:866px;" width="14" height="8" viewBox="0 0 14 8"><path d="M2 7 L7 2 L12 7 Z" fill="#8a8a8a"/></svg>
<div style="left:1896px;top:881px;width:13px;height:49px;background:#808080"></div>
<svg style="left:1895px;top:977px;" width="14" height="8" viewBox="0 0 14 8"><path d="M2 1.5 L7 6.5 L12 1.5 Z" fill="#8a8a8a"/></svg>
<div style="left:1913px;top:858px;width:1px;height:132px;background:#9db0c4"></div>
<div style="left:2px;top:990px;width:1913px;height:20px;background:#f0f0f0"></div>
<div style="left:2px;top:990px;width:16px;height:20px;background:#eef7fd"></div>
<div style="left:18px;top:990px;width:46px;height:20px;background:#fff"></div>
<svg style="left:4px;top:996px;" width="12" height="12" viewBox="0 0 12 12"><path d="M1.8 1.5 V10" stroke="#4a5a78" stroke-width="1.5"/><path d="M2.5 5.8 L7 1.5 V10 Z M6.5 5.8 L11 1.5 V10 Z" fill="#4a5a78"/></svg>
<span style="left:23px;top:995px;font-size:13px;line-height:13px;color:#111">5/5</span>
<svg style="left:51px;top:996px;" width="12" height="12" viewBox="0 0 12 12"><path d="M10.2 1.5 V10" stroke="#999" stroke-width="1.5"/><path d="M9.5 5.8 L5 1.5 V10 Z M5.5 5.8 L1 1.5 V10 Z" fill="#999"/></svg>
<svg style="left:71px;top:997px;" width="8" height="10" viewBox="0 0 8 10"><path d="M6.5 0.5 V9 L1 4.8 Z" fill="#888"/></svg>
<div style="left:87px;top:995px;width:491px;height:14px;background:#808080"></div>
<svg style="left:1877px;top:996px;" width="8" height="9" viewBox="0 0 8 9"><path d="M1.5 0.5 V8.5 L7 4.5 Z" fill="#777"/></svg>
</body></html>
